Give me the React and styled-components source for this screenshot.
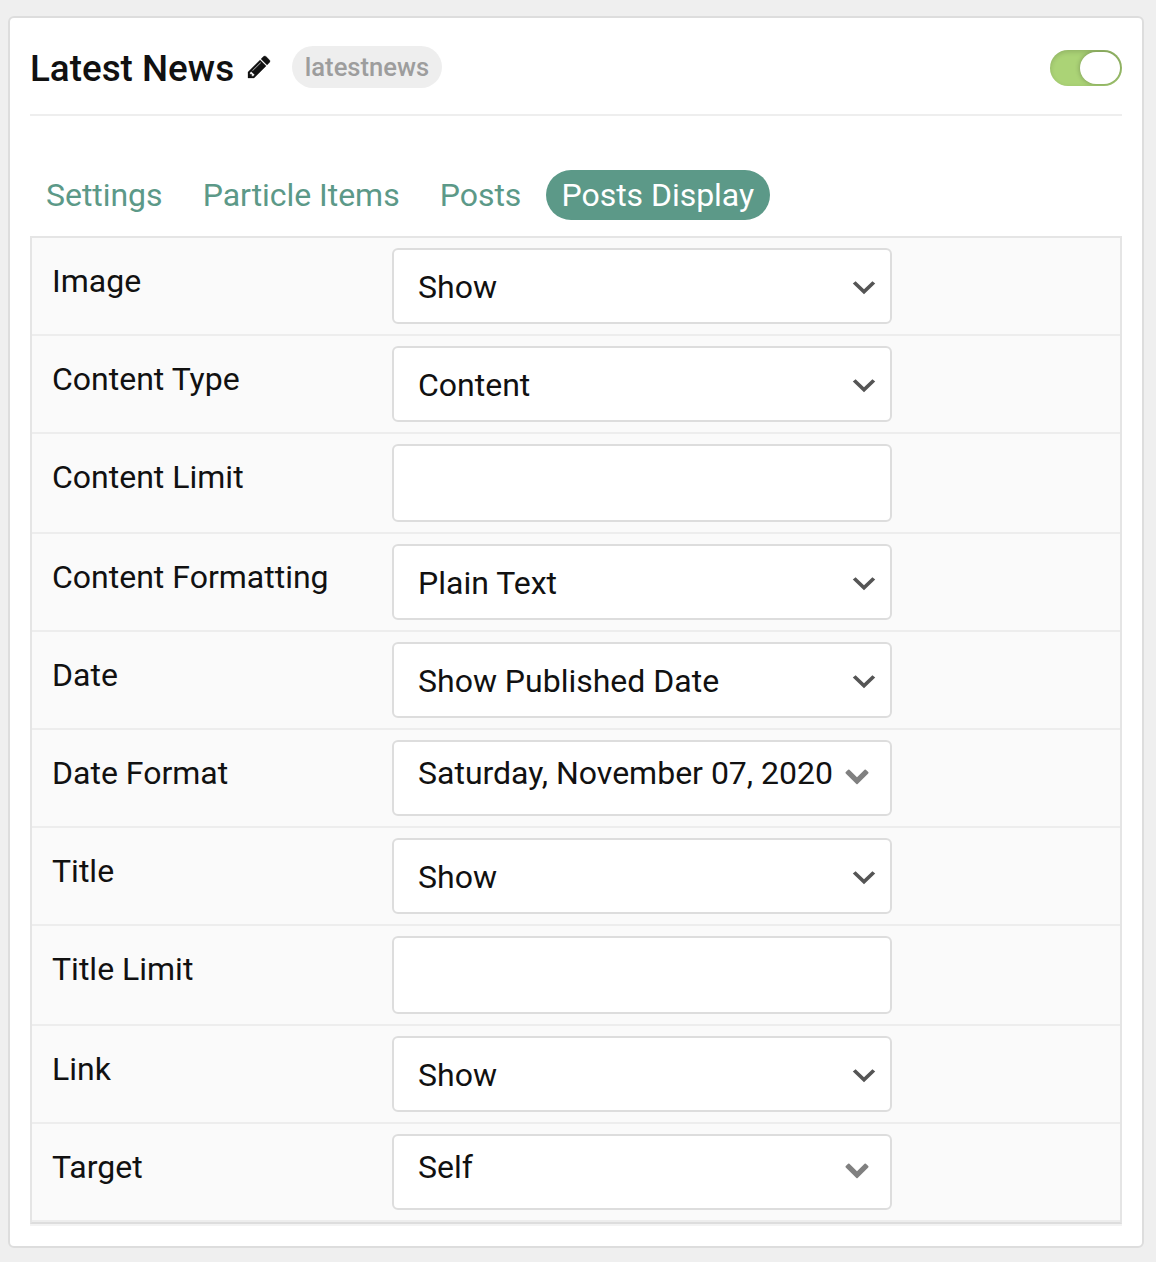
import React from "react";
import styled, { createGlobalStyle } from "styled-components";

const GlobalStyle = createGlobalStyle`
  *, *::before, *::after { box-sizing: border-box; }
  body {
    margin: 0;
    background: #efefef;
    color: #111;
    font-family: Roboto, "Liberation Sans", sans-serif;
    font-size: 32px;
    line-height: 50px;
  }
`;

const Page = styled.main`
  padding: 16px 12px 14px 8px;
`;

const Card = styled.section`
  height: 1232px;
  padding: 0 20px;
  background: #fff;
  border: 2px solid #ddd;
  border-radius: 6px;
`;

const Header = styled.header`
  display: flex;
  align-items: center;
  height: 98px;
  padding-top: 4px;
  border-bottom: 2px solid #eee;
`;

const Heading = styled.h1`
  margin: 2px 0 0;
  width: 218.4px;
  font-size: 36.8px;
  font-weight: 500;
  white-space: nowrap;
`;

const PencilIcon = styled.svg`
  width: 22px;
  height: 22px;
  margin: -2px 21.6px 0 0;
  fill: #111;
  stroke: #111;
  stroke-width: 20;
  overflow: visible;
`;

const Tag = styled.span`
  height: 42px;
  width: 150px;
  margin-top: -2px;
  border-radius: 21px;
  background: #eee;
  color: #9d9d9d;
  font-size: 25.6px;
  font-weight: 500;
  line-height: 42px;
  text-align: center;
`;

const Toggle = styled.button`
  display: flex;
  justify-content: flex-end;
  width: 72px;
  height: 36px;
  margin-left: auto;
  padding: 2px;
  border: 0;
  border-radius: 18px;
  overflow: hidden;
  background: #abd376;
  box-shadow: inset 0 2px 5px rgba(0, 0, 0, 0.15);
`;

const Knob = styled.span`
  width: 40px;
  height: 32px;
  border-radius: 16px;
  background: #fff;
  box-shadow: 0 0 5px rgba(0, 0, 0, 0.3);
`;

const Tabs = styled.nav`
  display: flex;
  gap: 8.2px;
  margin: 54px 0 16px;
`;

const Tab = styled.a`
  height: 50px;
  padding: 0 16px;
  border-radius: 25px;
  background: ${(p) => (p.$active ? "#5c9988" : "transparent")};
  color: ${(p) => (p.$active ? "#fff" : "#5c9988")};
  letter-spacing: -0.04px;
  white-space: nowrap;
`;

const Panel = styled.div`
  border: 2px solid #e5e5e5;
  border-bottom-color: #ddd;
  background: #fafafa;
  box-shadow: 0 2px 0 #f3f3f3;
`;

const Row = styled.div`
  display: flex;
  padding: 10px 20px;
  border-bottom: 2px solid #ededed;
`;

const Label = styled.label`
  width: 340px;
  padding-top: 8px;
`;

const Field = styled.div`
  display: flex;
  align-items: flex-start;
  justify-content: space-between;
  width: 500px;
  height: ${(p) => (p.$kind === "input" ? 78 : 76)}px;
  padding: ${(p) => (p.$kind === "picker" ? "6px 21px 0 24px" : "12px 14px 0 24px")};
  border: 2px solid #ddd;
  border-radius: 6px;
  background: #fff;
  white-space: nowrap;
`;

const ThinChevron = styled.svg`
  width: 24px;
  height: 14px;
  margin-top: 19px;
  fill: #555;
`;

const BoldChevron = styled.svg`
  width: 24px;
  height: 16px;
  margin-top: 21px;
  fill: #808080;
`;

const tabs = ["Settings", "Particle Items", "Posts", "Posts Display"];

const fields = [
  { label: "Image", kind: "select", value: "Show" },
  { label: "Content Type", kind: "select", value: "Content" },
  { label: "Content Limit", kind: "input", value: "" },
  { label: "Content Formatting", kind: "select", value: "Plain Text" },
  { label: "Date", kind: "select", value: "Show Published Date" },
  { label: "Date Format", kind: "picker", value: "Saturday, November 07, 2020" },
  { label: "Title", kind: "select", value: "Show" },
  { label: "Title Limit", kind: "input", value: "" },
  { label: "Link", kind: "select", value: "Show" },
  { label: "Target", kind: "picker", value: "Self" },
];

export default function App() {
  return (
    <Page>
      <GlobalStyle />
      <Card>
        <Header>
          <Heading>Latest News</Heading>
          <PencilIcon viewBox="0 21 1515 1515">
            <path d="M363 1408l91 -91l-235 -235l-91 91v107h128v128h107zM886 480q0 -22 -22 -22q-10 0 -17 7l-542 542q-7 7 -7 17q0 22 22 22q10 0 17 -7l542 -542q7 -7 7 -17zM832 288l416 416l-832 832h-416v-416zM1515 384q0 53 -37 90l-166 166l-416 -416l166 -165q36 -38 90 -38q53 0 91 38l235 234q37 39 37 91z" />
          </PencilIcon>
          <Tag>latestnews</Tag>
          <Toggle aria-label="Enabled">
            <Knob />
          </Toggle>
        </Header>
        <Tabs>
          {tabs.map((name) => (
            <Tab key={name} $active={name === "Posts Display"}>{name}</Tab>
          ))}
        </Tabs>
        <Panel>
          {fields.map((f) => (
            <Row key={f.label}>
              <Label>{f.label}</Label>
              <Field $kind={f.kind}>
                <span>{f.value}</span>
                {f.kind === "select" && (
                  <ThinChevron viewBox="0 0 24 14">
                    <path d="M.8 2.6L3.6 .3L12 8.2L20.4 .3L23.2 2.6L12 13.3Z" />
                  </ThinChevron>
                )}
                {f.kind === "picker" && (
                  <BoldChevron viewBox="55 500 1682 1121">
                    <path d="M1683 808l-742 741q-19 19-45 19t-45-19l-742-741q-19-19-19-45.5t19-45.5l166-165q19-19 45-19t45 19l531 531 531-531q19-19 45-19t45 19l166 165q19 19 19 45.5t-19 45.5z" />
                  </BoldChevron>
                )}
              </Field>
            </Row>
          ))}
        </Panel>
      </Card>
    </Page>
  );
}
